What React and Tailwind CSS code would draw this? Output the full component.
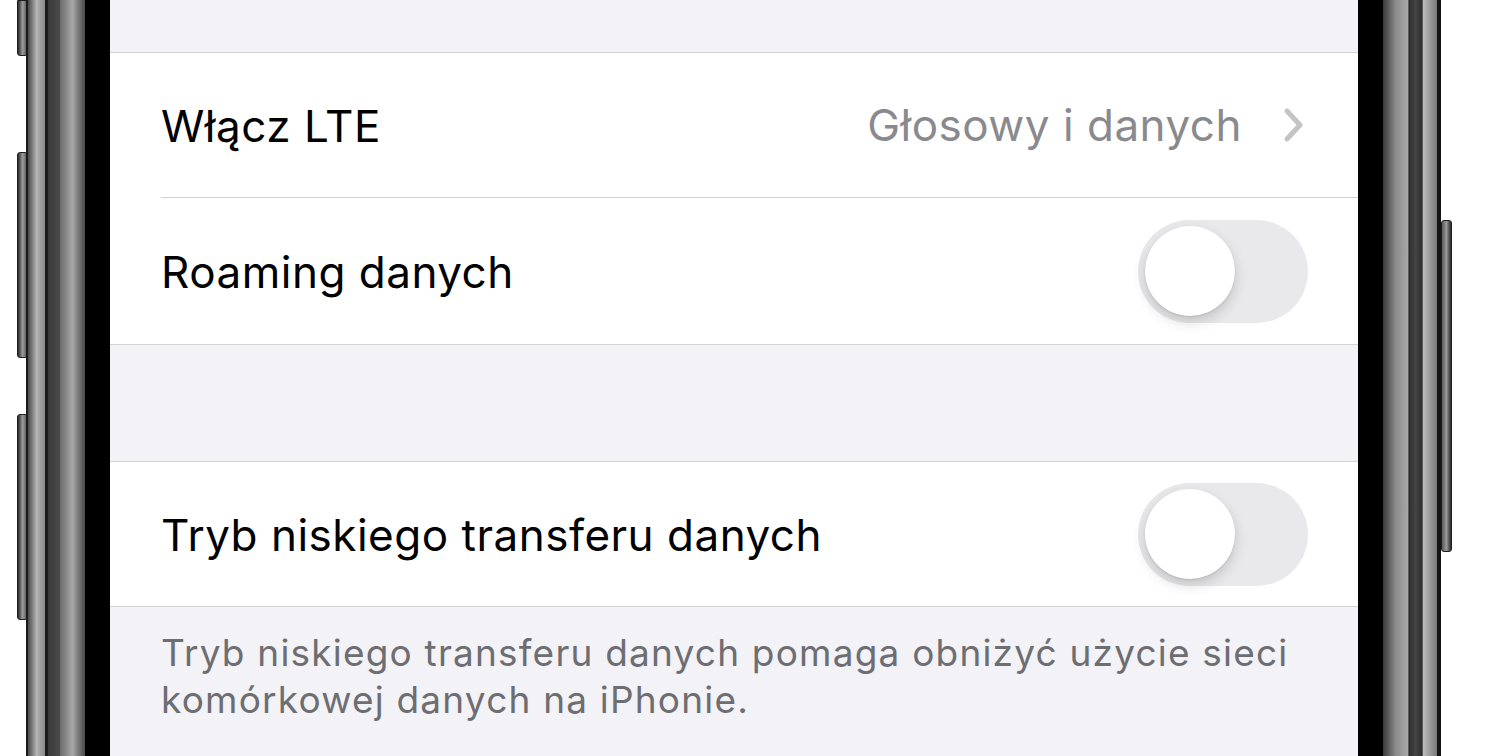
import React from 'react';

const font = { fontFamily: 'Inter, "Noto Sans", sans-serif' };

const Toggle = () => (
    <div className="w-[170px] h-[103px] shrink-0 rounded-full bg-[#e9e9eb] p-[7px] flex items-center">
        <div className="w-[90px] h-[90px] rounded-full bg-white shadow-[0_6px_14px_rgba(0,0,0,0.16),0_1px_2px_rgba(0,0,0,0.1)]" />
    </div>
);

const Chevron = () => (
    <svg width="22" height="36" viewBox="0 0 22 36" className="ml-[41px]">
        <path d="M4 4 L17 18 L4 32" fill="none" stroke="#c4c4c7" strokeWidth="5" strokeLinecap="round" strokeLinejoin="round" />
    </svg>
);

const Row = ({ label, children, divider, h }) => (
    <div className="bg-white pl-[51px]">
        <div className={`${h} flex items-center justify-between pr-[50px] ${divider ? 'border-b border-[#d1d1d6]' : ''}`}>
            <span className="text-[44px] text-black tracking-[0.5px] leading-none pt-[2px] whitespace-nowrap">{label}</span>
            {children}
        </div>
    </div>
);

const Screen = () => (
    <div className="w-[1248px] shrink-0 bg-[#f2f2f7] flex flex-col" style={font}>
        <div className="h-[53px] border-b border-[#d1d1d6]" />
        <Row label="Włącz LTE" divider h="h-[145px]">
            <div className="flex items-center pr-[3px]">
                <span className="text-[44px] text-[#8a8a8e] tracking-[0.5px] leading-none whitespace-nowrap">Głosowy i danych</span>
                <Chevron />
            </div>
        </Row>
        <Row label="Roaming danych" h="h-[146px]">
            <Toggle />
        </Row>
        <div className="h-[118px] border-y border-[#d1d1d6]" />
        <Row label="Tryb niskiego transferu danych" h="h-[144px]">
            <Toggle />
        </Row>
        <div className="border-t border-[#d1d1d6] pl-[51px] pr-[40px] pt-[22px]">
            <p className="text-[37px] leading-[47px] text-[#6d6d72] tracking-[1.2px]">
                Tryb niskiego transferu danych pomaga obniżyć użycie sieci komórkowej danych na iPhonie.
            </p>
        </div>
    </div>
);

const SideButton = ({ h, mt, side }) => (
    <div
        className={`w-[11px] shrink-0 rounded-[3px] bg-gradient-to-r ${side === 'left' ? 'from-[#2a2a2a] via-[#9a9a9a] to-[#5a5a5a]' : 'from-[#5a5a5a] via-[#9a9a9a] to-[#2a2a2a]'} border border-[#1e1e1e]`}
        style={{ height: h, marginTop: mt }}
    />
);

export default function App() {
    return (
        <div className="w-[1500px] h-[756px] bg-white flex overflow-hidden">
            {/* left buttons */}
            <div className="w-[17px] shrink-0" />
            <div className="w-[9px] shrink-0 flex flex-col">
                <div className="w-[11px] h-[56px] shrink-0 rounded-b-[3px] bg-gradient-to-r from-[#2a2a2a] via-[#9a9a9a] to-[#5a5a5a] border border-[#1e1e1e]" />
                <SideButton h={206} mt={96} side="left" />
                <SideButton h={206} mt={56} side="left" />
            </div>
            {/* left frame */}
            <div className="w-[2px] shrink-0 bg-[#1a1a1a]" />
            <div className="w-[17px] shrink-0 bg-gradient-to-r from-[#4a4a4a] via-[#b4b4b4] to-[#8a8a8a]" />
            <div className="w-[3px] shrink-0 bg-[#1c1c1c]" />
            <div className="w-[12px] shrink-0 bg-gradient-to-r from-[#3a3a3a] to-[#4a4a4a]" />
            <div className="w-[25px] shrink-0 bg-gradient-to-r from-[#6a6a6a] via-[#a8a8a8] to-[#4a4a4a]" />
            <div className="w-[25px] shrink-0 bg-black" />
            <Screen />
            {/* right frame */}
            <div className="w-[25px] shrink-0 bg-black" />
            <div className="w-[25px] shrink-0 bg-gradient-to-r from-[#3a3a3a] via-[#8a8a8a] to-[#a8a8a8]" />
            <div className="w-[15px] shrink-0 bg-gradient-to-r from-[#2e2e2e] via-[#444] to-[#2e2e2e] border-x border-[#5a5a5a]" />
            <div className="w-[14px] shrink-0 bg-gradient-to-r from-[#bdbdbd] via-[#9a9a9a] to-[#7a7a7a]" />
            <div className="w-[4px] shrink-0 bg-[#141414]" />
            <div className="w-[11px] shrink-0 flex flex-col">
                <SideButton h={332} mt={220} side="right" />
            </div>
            <div className="flex-1" />
        </div>
    );
}
